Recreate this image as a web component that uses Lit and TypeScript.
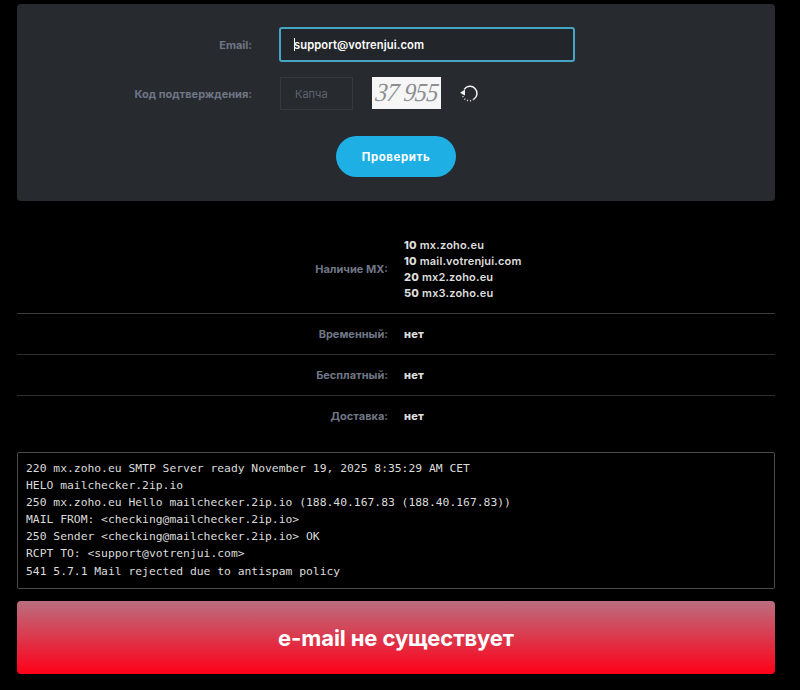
import { LitElement, html, css } from "lit";
import { customElement } from "lit/decorators.js";

const MX: [string, string][] = [
  ["10", "mx.zoho.eu"],
  ["10", "mail.votrenjui.com"],
  ["20", "mx2.zoho.eu"],
  ["50", "mx3.zoho.eu"],
];
const LOG = [
  "220 mx.zoho.eu SMTP Server ready November 19, 2025 8:35:29 AM CET",
  "HELO mailchecker.2ip.io",
  "250 mx.zoho.eu Hello mailchecker.2ip.io (188.40.167.83 (188.40.167.83))",
  "MAIL FROM: <checking@mailchecker.2ip.io>",
  "250 Sender <checking@mailchecker.2ip.io> OK",
  "RCPT TO: <support@votrenjui.com>",
  "541 5.7.1 Mail rejected due to antispam policy",
];

@customElement("app-root")
export class AppRoot extends LitElement {
  static styles = css`
    :host {
      display: block;
      height: 690px;
      box-sizing: border-box;
      overflow: hidden;
      background: #000;
      padding: 4px 25px 0 17px;
      font-family: "Inter", "Liberation Sans", sans-serif;
      font-weight: 700;
    }
    .panel {
      background: #272a2f;
      border-radius: 4px;
      height: 197px;
      box-sizing: border-box;
      padding-top: 23px;
      display: flex;
      flex-direction: column;
    }
    .row {
      display: grid;
      grid-template-columns: 235px 1fr;
      column-gap: 27px;
      align-items: center;
    }
    .label {
      text-align: right;
      font-size: 11px;
      color: #6f7686;
    }
    .email {
      width: 296px;
      height: 35px;
      box-sizing: border-box;
      border: 2px solid #45a5c4;
      border-radius: 3px;
      background: #22252a;
      padding-left: 13px;
      display: flex;
      align-items: center;
      color: #fff;
      font-size: 11.2px;
      font-weight: 600;
      letter-spacing: 0.1px;
    }
    .caret {
      width: 1px;
      height: 13px;
      background: #fff;
      margin-right: -1px;
    }
    .captcha-row {
      margin-top: 15px;
    }
    .captcha-cell {
      display: flex;
      align-items: center;
    }
    .captcha-input {
      width: 73px;
      height: 33px;
      box-sizing: border-box;
      border: 1px solid #353a40;
      padding-left: 14px;
      display: flex;
      align-items: center;
      font-size: 11px;
      font-weight: 400;
      color: #5f6570;
      margin-left: 1px;
    }
    .captcha-img {
      width: 69px;
      height: 32px;
      margin-left: 19px;
      margin-bottom: 1px;
      background: #f6f6f6;
      overflow: hidden;
      display: flex;
      align-items: center;
      justify-content: center;
    }
    .captcha-text {
      display: block;
      color: #8c8e91;
      font-family: "Liberation Serif", serif;
      font-style: italic;
      font-weight: 400;
      font-size: 26px;
      letter-spacing: -0.6px;
      white-space: nowrap;
      transform: scaleX(0.92) skewX(-8deg);
    }
    .refresh {
      display: block;
      margin-left: 18px;
      width: 20px;
      height: 20px;
    }
    .btn {
      align-self: flex-start;
      margin: 26px 0 0 319px;
      width: 120px;
      height: 41px;
      border-radius: 21px;
      background: #1eafe4;
      color: #fff;
      font-size: 11.5px;
      font-weight: 700;
      letter-spacing: 0.55px;
      display: flex;
      align-items: center;
      justify-content: center;
    }
    .table {
      margin-top: 24px;
    }
    .tr {
      display: grid;
      grid-template-columns: 371px 1fr;
      column-gap: 16px;
      align-items: center;
      padding: 12px 0;
      border-bottom: 1px solid #2e2e30;
      line-height: 16px;
      font-size: 11px;
    }
    .tr:first-child {
      border-bottom-color: #3c3c3e;
    }
    .tr:nth-child(2) {
      padding-top: 11.5px;
    }
    .tr:last-child {
      border-bottom: 0;
    }
    .val {
      color: #dedede;
      font-weight: 600;
      letter-spacing: 0.17px;
    }
    .val b {
      font-weight: 800;
    }
    .log {
      margin: 16.5px 0 0;
      height: 137px;
      box-sizing: border-box;
      border: 1px solid #4a4a4a;
      border-radius: 2px;
      padding: 7px 8px;
      font-family: "DejaVu Sans Mono", monospace;
      font-weight: 400;
      font-size: 11.35px;
      line-height: 17.1px;
      color: #dcdcdc;
      white-space: pre;
    }
    .status {
      margin-top: 12px;
      height: 73px;
      border-radius: 4px;
      background: linear-gradient(180deg, #b96f80 0%, #ff0018 100%);
      display: flex;
      align-items: center;
      justify-content: center;
      color: #fff;
      font-size: 22px;
      font-weight: 700;
      letter-spacing: -0.1px;
    }
  `;

  render() {
    return html`
      <div class="panel">
        <div class="row">
          <div class="label">Email:</div>
          <div class="email"><span class="caret"></span>support@votrenjui.com</div>
        </div>
        <div class="row captcha-row">
          <div class="label">Код подтверждения:</div>
          <div class="captcha-cell">
            <div class="captcha-input">Капча</div>
            <div class="captcha-img"><span class="captcha-text">37 955</span></div>
            <svg class="refresh" viewBox="0 0 20 20" fill="none">
              <path d="M5.2 5.4 A7 7 0 1 1 14.8 15.2" stroke="#f2f2f2" stroke-width="1.5" />
              <path d="M14.8 15.2 A7 7 0 0 1 3.4 10" stroke="#c9c9c9" stroke-width="1.5" stroke-dasharray="1.2 1.8" />
              <path d="M1 8.8 L6 5.4 L6 11.6 Z" fill="#f2f2f2" />
            </svg>
          </div>
        </div>
        <div class="btn">Проверить</div>
      </div>
      <div class="table">
        <div class="tr">
          <div class="label">Наличие MX:</div>
          <div class="val">${MX.map(([p, h]) => html`<div><b>${p}</b> ${h}</div>`)}</div>
        </div>
        <div class="tr"><div class="label">Временный:</div><div class="val"><b>нет</b></div></div>
        <div class="tr"><div class="label">Бесплатный:</div><div class="val"><b>нет</b></div></div>
        <div class="tr"><div class="label">Доставка:</div><div class="val"><b>нет</b></div></div>
      </div>
      <div class="log">${LOG.join("\n")}</div>
      <div class="status">e-mail не существует</div>
    `;
  }
}
